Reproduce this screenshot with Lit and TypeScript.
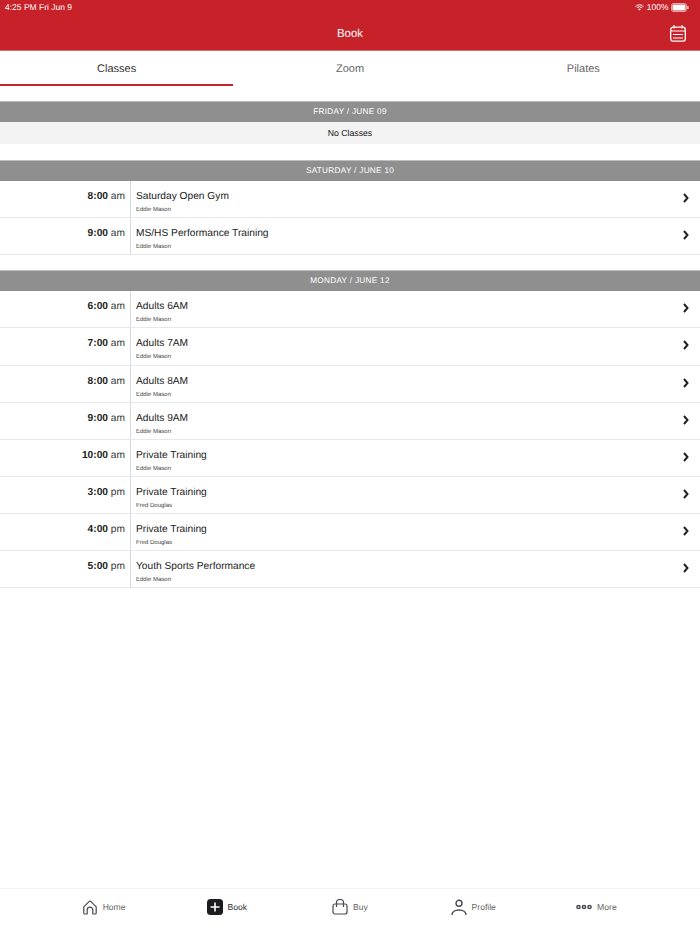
import { LitElement, html, css, svg } from "lit";
import { customElement } from "lit/decorators.js";

type Row = [string, string, string, string];
const sections: { title: string; rows: Row[] }[] = [
  { title: "SATURDAY / JUNE 10", rows: [
    ["8:00", "am", "Saturday Open Gym", "Eddie Mason"],
    ["9:00", "am", "MS/HS Performance Training", "Eddie Mason"],
  ]},
  { title: "MONDAY / JUNE 12", rows: [
    ["6:00", "am", "Adults 6AM", "Eddie Mason"],
    ["7:00", "am", "Adults 7AM", "Eddie Mason"],
    ["8:00", "am", "Adults 8AM", "Eddie Mason"],
    ["9:00", "am", "Adults 9AM", "Eddie Mason"],
    ["10:00", "am", "Private Training", "Eddie Mason"],
    ["3:00", "pm", "Private Training", "Fred Douglas"],
    ["4:00", "pm", "Private Training", "Fred Douglas"],
    ["5:00", "pm", "Youth Sports Performance", "Eddie Mason"],
  ]},
];

@customElement("app-root")
export class AppRoot extends LitElement {
  static styles = css`
    :host { display: flex; flex-direction: column; height: 934px; width: 700px; overflow: hidden; background: #fff;
      font-family: "Liberation Sans", Arial, sans-serif; color: #222; text-rendering: geometricPrecision; }
    .header { background: #c72129; color: #fff; height: 50px; border-bottom: 1px solid #dc6b70; flex: none; display: flex; flex-direction: column; }
    .status { height: 14px; display: flex; align-items: center; justify-content: space-between; padding: 0 11px 0 5px; font-size: 8.5px; }
    .status .right { display: flex; align-items: center; gap: 2.5px; }
    .nav { flex: 1; display: flex; align-items: center; justify-content: center; position: relative; font-size: 11.5px; padding-top: 3px; }
    .cal { position: absolute; right: 14px; top: 11px; }
    .tabs { display: flex; height: 35px; flex: none; }
    .tab { flex: 1; text-align: center; font-size: 11px; color: #666; line-height: 36px; height: 35px; box-sizing: border-box; }
    .tab.on { color: #333; border-bottom: 2px solid #c72129; }
    .list { flex: 1; padding-top: 15px; }
    .sec { height: 21px; background: #8f8f8f; color: #fff; font-size: 8.2px; letter-spacing: .3px; display: flex; align-items: center; justify-content: center; border-top: 1px solid #bdbdbd; box-sizing: border-box; padding-bottom: 1px; }
    .none { height: 22px; background: #f3f3f3; display: flex; align-items: center; justify-content: center; font-size: 8.7px; color: #111; margin-bottom: 16px; }
    .group { margin-bottom: 15px; }
    .row { display: flex; height: 37.15px; border-bottom: 1px solid #e6e8ee; box-sizing: border-box; }
    .time { border-right: 1px solid #d5d8e2; box-sizing: content-box; text-align: right; padding-right: 5px; width: 125px; font-size: 10.2px; line-height: 32px; color: #333; }
    .time b { color: #222; }
    .info { flex: 1; padding: 9px 0 0 5px; }
    .name { font-size: 10.2px; line-height: 14px; color: #222; }
    .who { font-size: 6px; line-height: 7px; margin-top: 3px; color: #444; }
    .chev { align-self: center; margin: 0 11px 0 0; flex: none; position: relative; top: -1px; }
    .bar { height: 46px; flex: none; border-top: 1px solid #f5f5f5; display: flex; padding: 0 42px 10px; box-sizing: border-box; }
    .item { flex: 1; display: flex; align-items: center; justify-content: center; gap: 5px; font-size: 8.6px; color: #666; }
    .item.on { color: #333; }
  `;

  ic(name: string) {
    const s = "#4a4a52";
    const parts: Record<string, unknown> = {
      home: svg`<path d="M1.800 7.800 7 2.600a1.400 1.400 0 0 1 2 0l5.200 5.200v6.200a1 1 0 0 1-1 1h-2.400V11a2.800 2.800 0 0 0-5.600 0v4H2.800a1 1 0 0 1-1-1z" fill="none" stroke="${s}" stroke-width="1.200" stroke-linejoin="round"/>`,
      book: svg`<rect x="0" y="0" width="16" height="16" rx="3.500" fill="#1c1c20"/><path d="M8 3.500v9M3.500 8h9" stroke="#fff" stroke-width="1.600"/>`,
      buy: svg`<rect x="1" y="5" width="14" height="10" rx="2" fill="none" stroke="${s}" stroke-width="1.200"/><path d="M4.500 8V3.500a3.500 3 0 0 1 7 0V8" fill="none" stroke="${s}" stroke-width="1.200"/>`,
      profile: svg`<circle cx="8" cy="4.300" r="3" fill="none" stroke="${s}" stroke-width="1.400"/><path d="M1 16c0-3 3-5 7-5s7 2 7 5" fill="none" stroke="${s}" stroke-width="1.400"/>`,
      more: svg`<circle cx="2.500" cy="8" r="1.600" fill="none" stroke="${s}" stroke-width="1.500"/><circle cx="8" cy="8" r="1.600" fill="none" stroke="${s}" stroke-width="1.500"/><circle cx="13.500" cy="8" r="1.600" fill="none" stroke="${s}" stroke-width="1.500"/>`,
    };
    return html`<svg width="16" height="16" viewBox="0 0 16 16">${parts[name]}</svg>`;
  }

  render() {
    return html`
      <div class="header">
        <div class="status"><span>4:25 PM Fri Jun 9</span>
          <span class="right">
            <svg width="9" height="7" viewBox="0 0 11 8"><path d="M.5 2.800a7 7 0 0 1 10 0M2.200 4.500a4.600 4.600 0 0 1 6.600 0" fill="none" stroke="#fff" stroke-width="1.200"/><path d="M4 6a2 2 0 0 1 3 0L5.500 7.600z" fill="#fff"/></svg>
            <span>100%</span>
            <svg width="18" height="9" viewBox="0 0 18 9"><rect x=".5" y=".5" width="15" height="8" rx="2" fill="none" stroke="#fff" stroke-opacity=".6"/><rect x="1.500" y="1.500" width="13" height="6" rx="1" fill="#fff"/><rect x="16.300" y="3" width="1.200" height="3" fill="#eee"/></svg>
          </span></div>
        <div class="nav">Book
          <svg class="cal" width="16" height="17" viewBox="0 0 16 17"><rect x=".7" y="2.200" width="14.600" height="14" rx="2.500" fill="none" stroke="#fff" stroke-width="1.300"/><path d="M4 0v3.500M12 0v3.500M.7 6h14.600M3 9.500h10M3 13h10" stroke="#fff" stroke-width="1.100" fill="none"/></svg>
        </div>
      </div>
      <div class="tabs"><div class="tab on">Classes</div><div class="tab">Zoom</div><div class="tab">Pilates</div></div>
      <div class="list">
        <div class="sec">FRIDAY / JUNE 09</div>
        <div class="none">No Classes</div>
        ${sections.map(s => html`<div class="group"><div class="sec">${s.title}</div>
          ${s.rows.map(r => html`<div class="row">
            <div class="time"><b>${r[0]}</b> ${r[1]}</div>
            <div class="info"><div class="name">${r[2]}</div><div class="who">${r[3]}</div></div>
            <svg class="chev" width="6" height="10" viewBox="0 0 6 10"><path d="M1 1l3.500 4L1 9" fill="none" stroke="#222" stroke-width="2"/></svg>
          </div>`)}</div>`)}
      </div>
      <div class="bar">
        <div class="item">${this.ic("home")}Home</div>
        <div class="item on">${this.ic("book")}Book</div>
        <div class="item">${this.ic("buy")}Buy</div>
        <div class="item">${this.ic("profile")}Profile</div>
        <div class="item">${this.ic("more")}More</div>
      </div>`;
  }
}
